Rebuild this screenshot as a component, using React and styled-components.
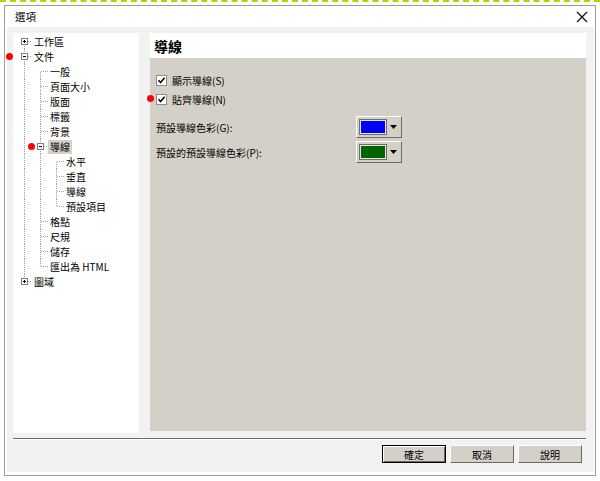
import React from 'react';
import styled, { createGlobalStyle } from 'styled-components';

const Global = createGlobalStyle`
  html, body { margin: 0; padding: 0; background: #fff; }
  body {
    font-family: "Noto Sans CJK TC", "Noto Sans", "Liberation Sans", sans-serif;
    font-size: 10px;
    color: #000;
  }
  * { box-sizing: border-box; }
`;

const Page = styled.div`
  width: 600px;
  height: 481px;
  border-top: 2px dashed #b4d400;
  padding: 3px 0 0 4px;
  overflow: hidden;
`;

const Dialog = styled.div`
  width: 592px;
  height: 471px;
  border: 1px solid #9c9c9c;
  background: #fff;
  display: flex;
  flex-direction: column;
  padding: 0 1px 3px 2px;
`;

const TitleBar = styled.div`
  height: 21px;
  flex: none;
  display: flex;
  align-items: center;
  justify-content: space-between;
  padding: 0 6px 0 8px;
  font-size: 10.5px;
`;

const Body = styled.div`
  flex: 1;
  background: #f2f2f2;
  padding: 6px 8px 0 6px;
  display: flex;
  flex-direction: column;
`;

const Main = styled.div`
  display: flex;
  gap: 11px;
  height: 400px;
  flex: none;
`;

const TreePanel = styled.div`
  width: 126px;
  height: 400px;
  background: #fff;
  padding: 1px 0 0 3px;
`;

const Row = styled.div`
  position: relative;
  display: flex;
  align-items: center;
  height: 15px;
  line-height: 15px;
  white-space: nowrap;
`;

const Cell = styled.svg`
  width: 16px;
  height: 15px;
  flex: none;
  display: block;
`;

const Label = styled.span`
  padding: 0 2px;
  line-height: 14px;
  background: ${p => (p.$selected ? '#d4d0c8' : 'transparent')};
`;

const Dot = styled.span`
  position: absolute;
  width: 7px;
  height: 7px;
  border-radius: 50%;
  background: #f00;
  left: ${p => p.$left}px;
  top: ${p => p.$top}px;
`;

const RightPanel = styled.div`
  flex: 1;
  height: 398px;
  display: flex;
  flex-direction: column;
`;

const Header = styled.div`
  height: 25px;
  flex: none;
  background: #fff;
  display: flex;
  align-items: center;
  padding-left: 4px;
  font-size: 14px;
  font-weight: bold;
`;

const Content = styled.div`
  flex: 1;
  background: #d4d0c8;
  padding: 13px 6px 0 6px;
  display: flex;
  flex-direction: column;
`;

const CheckRow = styled.div`
  position: relative;
  display: flex;
  align-items: center;
  gap: 5px;
  height: 18px;
  margin-bottom: ${p => p.$mb || 0}px;
`;

const Box = styled.span`
  width: 11px;
  height: 11px;
  background: #fff;
  border: 1px solid #8e8e8e;
  display: inline-flex;
  align-items: center;
  justify-content: center;
`;

const ColorRow = styled.div`
  display: flex;
  align-items: center;
  height: 22px;
  margin-bottom: ${p => p.$mb || 0}px;
`;

const ColorLabel = styled.span`
  width: 200px;
`;

const ColorButton = styled.div`
  width: 46px;
  height: 22px;
  background: #d4d0c8;
  border: 1px solid;
  border-color: #fff #6a6a6a #6a6a6a #fff;
  display: flex;
  align-items: center;
  padding-left: 2px;
  gap: 3px;
`;

const Swatch = styled.span`
  width: 28px;
  height: 16px;
  border: 1px solid #6e6e6e;
  box-shadow: inset 0 0 0 1px #e8e4d8;
  background: ${p => p.$color};
`;

const Separator = styled.div`
  margin-top: 5px;
  height: 2px;
  border-top: 1px solid #6c6c6c;
  border-bottom: 1px solid #fff;
`;

const ButtonRow = styled.div`
  margin-top: 5px;
  display: flex;
  justify-content: flex-end;
  gap: 4px;
  padding-right: 4px;
`;

const Button = styled.div`
  width: 64px;
  height: 18px;
  background: #d4d0c8;
  border: 1px solid;
  border-color: ${p => (p.$default ? '#000' : '#fff #6a6a6a #6a6a6a #fff')};
  box-shadow: ${p => (p.$default ? 'inset 1px 1px #fff, inset -1px -1px #6a6a6a' : 'none')};
  display: flex;
  align-items: center;
  justify-content: center;
  font-size: 10px;
`;

const LINE = '#a0a0a0';

const Guide = ({ on }) => (
  <Cell viewBox="0 0 16 15" shapeRendering="crispEdges">
    {on && <line x1="8.5" y1="0" x2="8.5" y2="15" stroke={LINE} strokeDasharray="1 1" />}
  </Cell>
);

const Connector = ({ top, bottom, box }) => (
  <Cell viewBox="0 0 16 15" shapeRendering="crispEdges">
    {top && <line x1="8.5" y1="0" x2="8.5" y2="7.5" stroke={LINE} strokeDasharray="1 1" />}
    {bottom && <line x1="8.5" y1="7.5" x2="8.5" y2="15" stroke={LINE} strokeDasharray="1 1" />}
    <line x1={box ? 12 : 9} y1="7.5" x2="16" y2="7.5" stroke={LINE} strokeDasharray="1 1" />
    {box && (
      <>
        <rect x="5.5" y="4.5" width="6" height="6" fill="#fff" stroke="#808080" />
        <line x1="7" y1="7.5" x2="10" y2="7.5" stroke="#000" />
        {box === 'plus' && <line x1="8.5" y1="6" x2="8.5" y2="9" stroke="#000" />}
      </>
    )}
  </Cell>
);

const rows = [
  { label: '工作區', g: [], top: false, bottom: true, box: 'plus' },
  { label: '文件', g: [], top: true, bottom: true, box: 'minus', dot: -10 },
  { label: '一般', g: [true], top: false, bottom: true },
  { label: '頁面大小', g: [true], top: true, bottom: true },
  { label: '版面', g: [true], top: true, bottom: true },
  { label: '標籤', g: [true], top: true, bottom: true },
  { label: '背景', g: [true], top: true, bottom: true },
  { label: '導線', g: [true], top: true, bottom: true, box: 'minus', selected: true, dot: 12 },
  { label: '水平', g: [true, true], top: false, bottom: true },
  { label: '垂直', g: [true, true], top: true, bottom: true },
  { label: '導線', g: [true, true], top: true, bottom: true },
  { label: '預設項目', g: [true, true], top: true, bottom: false },
  { label: '格點', g: [true], top: true, bottom: true },
  { label: '尺規', g: [true], top: true, bottom: true },
  { label: '儲存', g: [true], top: true, bottom: true },
  { label: '匯出為 HTML', g: [true], top: true, bottom: false },
  { label: '圖域', g: [], top: true, bottom: false, box: 'plus' },
];

const Check = () => (
  <svg width="9" height="9" viewBox="0 0 9 9">
    <path d="M1.5 4.2 L3.6 6.5 L7.6 1.8" fill="none" stroke="#000" strokeWidth="1.5" />
  </svg>
);

const Arrow = () => (
  <svg width="7" height="4" viewBox="0 0 7 4">
    <path d="M0 0 H7 L3.5 4 Z" fill="#000" />
  </svg>
);

const Close = () => (
  <svg width="12" height="12" viewBox="0 0 12 12">
    <path d="M1 1 L11 11 M11 1 L1 11" stroke="#111" strokeWidth="1.3" />
  </svg>
);

export default function App() {
  return (
    <>
      <Global />
      <Page>
        <Dialog>
          <TitleBar>
            <span>選項</span>
            <Close />
          </TitleBar>
          <Body>
            <Main>
              <TreePanel>
                {rows.map((r, i) => (
                  <Row key={i}>
                    {r.g.map((on, j) => (
                      <Guide key={j} on={on} />
                    ))}
                    <Connector top={r.top} bottom={r.bottom} box={r.box} />
                    <Label $selected={r.selected}>{r.label}</Label>
                    {r.dot !== undefined && <Dot $left={r.dot} $top={4} />}
                  </Row>
                ))}
              </TreePanel>
              <RightPanel>
                <Header>導線</Header>
                <Content>
                  <CheckRow $mb={1}>
                    <Box><Check /></Box>
                    <span>顯示導線(S)</span>
                  </CheckRow>
                  <CheckRow $mb={8}>
                    <Box><Check /></Box>
                    <span>貼齊導線(N)</span>
                    <Dot $left={-9} $top={5} />
                  </CheckRow>
                  <ColorRow $mb={3}>
                    <ColorLabel>預設導線色彩(G):</ColorLabel>
                    <ColorButton>
                      <Swatch $color="#0000ff" />
                      <Arrow />
                    </ColorButton>
                  </ColorRow>
                  <ColorRow>
                    <ColorLabel>預設的預設導線色彩(P):</ColorLabel>
                    <ColorButton>
                      <Swatch $color="#006400" />
                      <Arrow />
                    </ColorButton>
                  </ColorRow>
                </Content>
              </RightPanel>
            </Main>
            <Separator />
            <ButtonRow>
              <Button $default>確定</Button>
              <Button>取消</Button>
              <Button>說明</Button>
            </ButtonRow>
          </Body>
        </Dialog>
      </Page>
    </>
  );
}
